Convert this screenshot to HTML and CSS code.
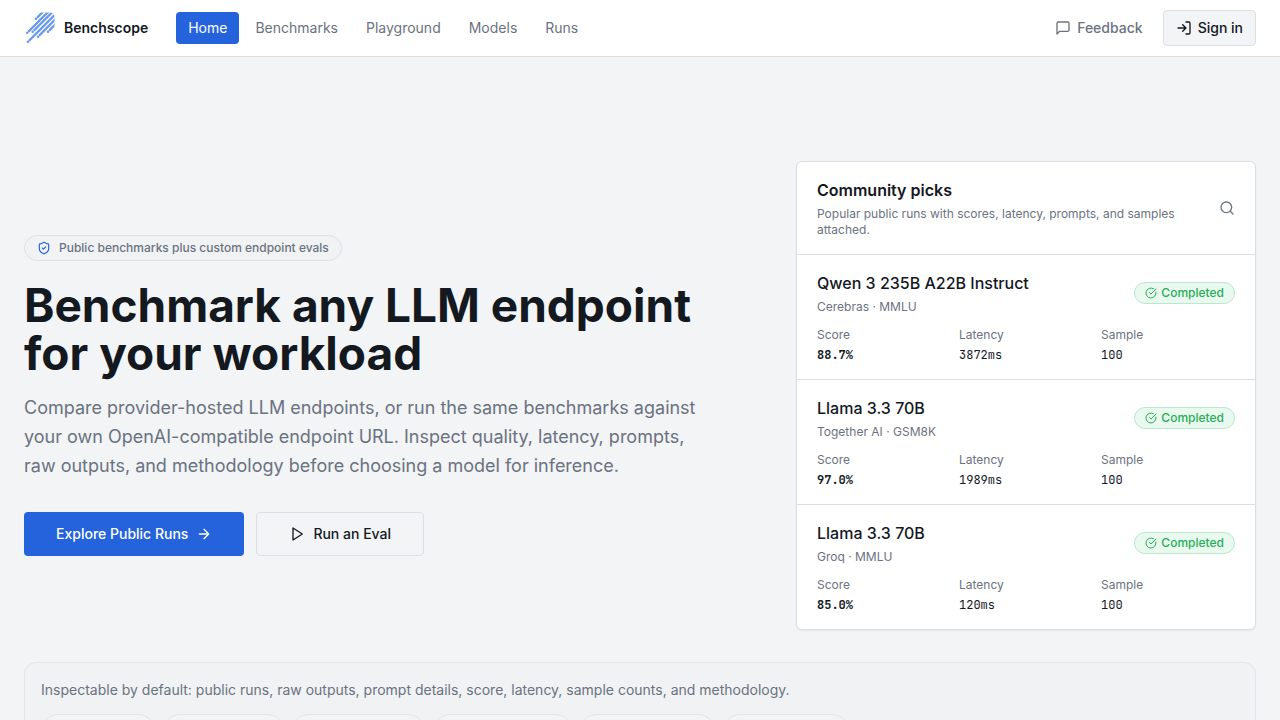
FILE: index.html
```html
<!DOCTYPE html>
<html lang="en">
<head>
    <meta charset="UTF-8">
    <meta name="viewport" content="width=device-width, initial-scale=1.0">
    <title>Benchscope</title>
    <link rel="stylesheet" href="styles.css">
</head>
<body>
    <!-- Shared icon shapes -->
    <svg class="sprite" aria-hidden="true">
        <symbol id="icon-check" viewBox="0 0 24 24">
            <path d="M21.8 10A10 10 0 1 1 17 3.34"/>
            <path d="m9 11 3 3L22 4"/>
        </symbol>
    </svg>

    <header class="site-header">
        <a class="brand" href="#">
            <svg class="logo" viewBox="0 0 32 32" aria-hidden="true">
                <clipPath id="logo-shape"><path d="M0 0.5h26q4.5 0 4.5 4.5v27H0z"/></clipPath>
                <g class="logo-lines" clip-path="url(#logo-shape)">
                    <path d="M13 5.7 20-1.3M4.3 19.7 25-1M9.7 18.7 30-1.6M5 28.7 32 1.7M15 23.7 32 6.7M25 18.7 32 11.7"/>
                </g>
                <g class="logo-dots">
                    <circle cx="12" cy="6.7" r="1.3"/>
                    <circle cx="3.3" cy="20.7" r="1.3"/>
                    <circle cx="8.7" cy="19.7" r="1.3"/>
                    <circle cx="4" cy="29.7" r="1.3"/>
                    <circle cx="14" cy="24.7" r="1.3"/>
                    <circle cx="24" cy="19.7" r="1.3"/>
                </g>
            </svg>
            Benchscope
        </a>
        <nav class="main-nav">
            <a class="active" href="#">Home</a>
            <a href="#">Benchmarks</a>
            <a href="#">Playground</a>
            <a href="#">Models</a>
            <a href="#">Runs</a>
        </nav>
        <div class="header-actions">
            <button class="feedback" type="button">
                <svg class="icon" viewBox="0 0 24 24" aria-hidden="true"><path d="M21 15a2 2 0 0 1-2 2H7l-4 4V5a2 2 0 0 1 2-2h14a2 2 0 0 1 2 2z"/></svg>
                Feedback
            </button>
            <button class="sign-in" type="button">
                <svg class="icon" viewBox="0 0 24 24" aria-hidden="true"><path d="m10 17 5-5-5-5M15 12H3M15 3h4a2 2 0 0 1 2 2v14a2 2 0 0 1-2 2h-4"/></svg>
                Sign in
            </button>
        </div>
    </header>

    <main>
        <section class="hero">
            <div class="intro">
                <div class="tagline">
                    <svg class="icon icon-blue" viewBox="0 0 24 24" aria-hidden="true"><path d="M20 13c0 5-3.5 7.5-7.66 8.95a1 1 0 0 1-.67-.01C7.5 20.5 4 18 4 13V6a1 1 0 0 1 1-1c2 0 4.5-1.2 6.24-2.72a1.17 1.17 0 0 1 1.52 0C14.51 3.81 17 5 19 5a1 1 0 0 1 1 1z"/><path d="m9 12 2 2 4-4"/></svg>
                    Public benchmarks plus custom endpoint evals
                </div>
                <h1>Benchmark any LLM endpoint for your workload</h1>
                <p>Compare provider-hosted LLM endpoints, or run the same benchmarks against your own OpenAI-compatible endpoint URL. Inspect quality, latency, prompts, raw outputs, and methodology before choosing a model for inference.</p>
                <div class="cta">
                    <a class="btn btn-primary" href="#">
                        Explore Public Runs
                        <svg class="icon" viewBox="0 0 24 24" aria-hidden="true"><path d="M5 12h14M12 5l7 7-7 7"/></svg>
                    </a>
                    <a class="btn btn-outline" href="#">
                        <svg class="icon" viewBox="0 0 24 24" aria-hidden="true"><path d="m6 3 14 9-14 9z"/></svg>
                        Run an Eval
                    </a>
                </div>
            </div>

            <div class="card">
                <div class="card-header">
                    <div>
                        <h2>Community picks</h2>
                        <p>Popular public runs with scores, latency, prompts, and samples attached.</p>
                    </div>
                    <svg class="icon" viewBox="0 0 24 24" aria-hidden="true"><circle cx="11" cy="11" r="8"/><path d="m21 21-4.3-4.3"/></svg>
                </div>

                <article class="run">
                    <div class="run-top">
                        <div>
                            <h3>Qwen 3 235B A22B Instruct</h3>
                            <p>Cerebras · MMLU</p>
                        </div>
                        <span class="status"><svg class="icon" aria-hidden="true"><use href="#icon-check"/></svg>Completed</span>
                    </div>
                    <dl class="stats">
                        <div><dt>Score</dt><dd class="score">88.7%</dd></div>
                        <div><dt>Latency</dt><dd>3872ms</dd></div>
                        <div><dt>Sample</dt><dd>100</dd></div>
                    </dl>
                </article>

                <article class="run">
                    <div class="run-top">
                        <div>
                            <h3>Llama 3.3 70B</h3>
                            <p>Together AI · GSM8K</p>
                        </div>
                        <span class="status"><svg class="icon" aria-hidden="true"><use href="#icon-check"/></svg>Completed</span>
                    </div>
                    <dl class="stats">
                        <div><dt>Score</dt><dd class="score">97.0%</dd></div>
                        <div><dt>Latency</dt><dd>1989ms</dd></div>
                        <div><dt>Sample</dt><dd>100</dd></div>
                    </dl>
                </article>

                <article class="run">
                    <div class="run-top">
                        <div>
                            <h3>Llama 3.3 70B</h3>
                            <p>Groq · MMLU</p>
                        </div>
                        <span class="status"><svg class="icon" aria-hidden="true"><use href="#icon-check"/></svg>Completed</span>
                    </div>
                    <dl class="stats">
                        <div><dt>Score</dt><dd class="score">85.0%</dd></div>
                        <div><dt>Latency</dt><dd>120ms</dd></div>
                        <div><dt>Sample</dt><dd>100</dd></div>
                    </dl>
                </article>
            </div>
        </section>

        <section class="details">
            <p>Inspectable by default: public runs, raw outputs, prompt details, score, latency, sample counts, and methodology.</p>
            <ul class="chips">
                <li><svg class="icon" aria-hidden="true"><use href="#icon-check"/></svg>Public runs</li>
                <li><svg class="icon" aria-hidden="true"><use href="#icon-check"/></svg>Raw outputs</li>
                <li><svg class="icon" aria-hidden="true"><use href="#icon-check"/></svg>Prompt details</li>
                <li><svg class="icon" aria-hidden="true"><use href="#icon-check"/></svg>Score &amp; latency</li>
                <li><svg class="icon" aria-hidden="true"><use href="#icon-check"/></svg>Sample counts</li>
                <li><svg class="icon" aria-hidden="true"><use href="#icon-check"/></svg>Methodology</li>
            </ul>
        </section>
    </main>
</body>
</html>
```
FILE: styles.css
```css
* {
    box-sizing: border-box;
}

body {
    margin: 0;
    font-family: Inter, "Liberation Sans", sans-serif;
    font-size: 14px;
    line-height: 20px;
    color: #14181f;
    background-color: #f2f4f6;
}

h1, h2, h3, p, dl, dd, ul {
    margin: 0;
}

a {
    color: inherit;
    text-decoration: none;
}

button {
    font: inherit;
    cursor: pointer;
}

.sprite {
    display: none;
}

.icon {
    width: 16px;
    height: 16px;
    flex-shrink: 0;
    fill: none;
    stroke: currentColor;
    stroke-width: 2;
    stroke-linecap: round;
    stroke-linejoin: round;
}

/* Header */
.site-header {
    display: flex;
    align-items: center;
    padding: 10px 24px;
    background-color: white;
    border-bottom: 1px solid #d8dee4;
}

.brand {
    display: flex;
    align-items: center;
    gap: 8px;
    margin-right: 28px;
    font-weight: 600;
}

.logo {
    width: 32px;
    height: 32px;
}

.logo-lines {
    fill: none;
    stroke: #6699ea;
    stroke-width: 2.3;
}

.logo-dots {
    fill: #6699ea;
}

.main-nav {
    display: flex;
    gap: 4px;
    color: #6b7280;
}

.main-nav a {
    padding: 6px 12px;
    border-radius: 4px;
}

.main-nav .active {
    color: white;
    background-color: #2563dc;
}

.header-actions {
    display: flex;
    gap: 8px;
    margin-left: auto;
}

.header-actions button {
    display: flex;
    align-items: center;
    gap: 6px;
    height: 36px;
    padding: 0 12px;
    border: 0;
    border-radius: 4px;
    background: none;
    font-weight: 500;
}

.header-actions .feedback {
    color: #6b7280;
}

.header-actions .sign-in {
    color: #14181f;
    background-color: #f2f4f6;
    border: 1px solid #dcdfe3;
}

/* Hero */
main {
    padding: 104px 24px 48px;
}

.hero {
    display: grid;
    grid-template-columns: 1fr 460px;
    align-items: center;
    gap: 48px;
}

.tagline {
    display: inline-flex;
    align-items: center;
    gap: 8px;
    padding: 4px 12px;
    border: 1px solid #dee0e4;
    border-radius: 13px;
    background-color: #f0f2f4;
    color: #6b7280;
    font-size: 12px;
    line-height: 16px;
    font-weight: 500;
}

.tagline .icon {
    width: 14px;
    height: 14px;
}

.icon-blue {
    color: #2563dc;
}

h1 {
    margin-top: 20px;
    font-size: 46px;
    line-height: 48px;
    font-weight: 700;
}

.intro p {
    max-width: 672px;
    margin-top: 16px;
    color: #6b7280;
    font-size: 18px;
    line-height: 29px;
}

.cta {
    display: flex;
    gap: 12px;
    margin-top: 32px;
}

.btn {
    display: flex;
    align-items: center;
    gap: 8px;
    height: 44px;
    padding: 0 32px;
    border-radius: 4px;
    font-weight: 500;
}

.btn-primary {
    color: white;
    background-color: #2563dc;
}

.btn-outline {
    border: 1px solid #dcdfe3;
}

/* Community picks */
.card {
    background-color: white;
    border: 1px solid #d8dee4;
    border-radius: 6px;
    box-shadow: 0 1px 2px rgba(0, 0, 0, 0.05);
}

.card-header {
    display: flex;
    align-items: center;
    justify-content: space-between;
    gap: 24px;
    padding: 16px 20px;
    color: #6b7280;
}

h2, h3 {
    color: #14181f;
    font-size: 16px;
    line-height: 24px;
    font-weight: 600;
}

h3 {
    font-weight: 500;
}

.card p {
    margin-top: 4px;
    color: #6b7280;
    font-size: 12px;
    line-height: 16px;
}

.run {
    padding: 16px 20px;
    border-top: 1px solid #d8dee4;
}

.run-top {
    display: flex;
    align-items: center;
    justify-content: space-between;
}

.status {
    display: flex;
    align-items: center;
    gap: 4px;
    padding: 2px 10px;
    border: 1px solid #b9e8cb;
    border-radius: 11px;
    background-color: #e9f9ef;
    color: #27ae58;
    font-size: 12px;
    line-height: 16px;
    font-weight: 500;
}

.status .icon {
    width: 12px;
    height: 12px;
}

.stats {
    display: grid;
    grid-template-columns: repeat(3, 1fr);
    gap: 8px;
    margin-top: 12px;
    font-size: 12px;
    line-height: 16px;
}

.stats dt {
    color: #6b7280;
}

.stats dd {
    margin-top: 4px;
    font-family: "JetBrains Mono", "Liberation Mono", monospace;
}

.stats .score {
    font-weight: 700;
}

/* Details strip */
.details {
    margin-top: 32px;
    padding: 17px 16px;
    border: 1px solid #e3e5e8;
    border-radius: 12px;
    background-color: #f0f2f4;
    color: #6b7280;
}

.chips {
    display: flex;
    flex-wrap: wrap;
    gap: 8px;
    margin-top: 14px;
    padding: 0;
    list-style: none;
}

.chips li {
    display: flex;
    align-items: center;
    gap: 8px;
    padding: 8px 12px;
    border: 1px solid #e3e5e8;
    border-radius: 17px;
    background-color: #f2f4f6;
    font-size: 12px;
    line-height: 16px;
    font-weight: 500;
}
```
